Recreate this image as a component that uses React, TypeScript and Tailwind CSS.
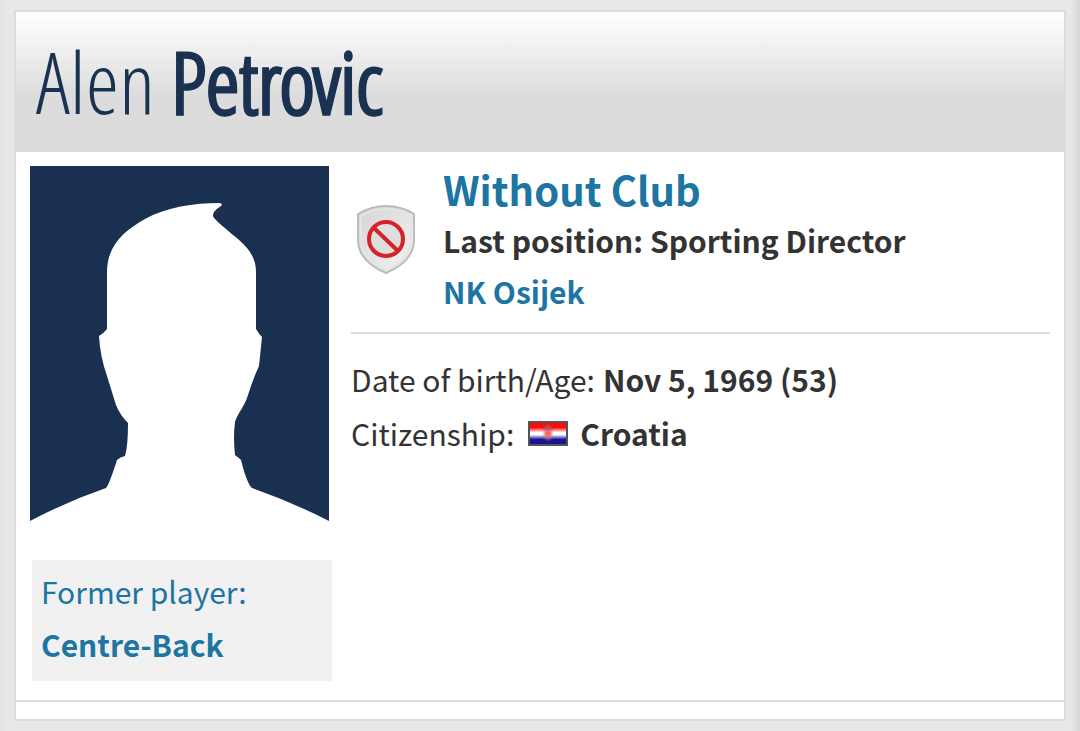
export default function App() {
  return (
    <div className="flex min-h-screen flex-col bg-[linear-gradient(to_right,#e3e3e3_0px,#e8e8e8_10px,#e8e8e8_calc(100%-9px),#d4d4d4_100%)] px-3.5 py-2.5 font-['Noto_Sans_CJK_SC',sans-serif] text-[30px] text-[#333333]">
      <main className="flex-1 border-2 border-[#dcdcdc] bg-white">
        <ProfileHeader />
        <div className="flex gap-5 px-3.5 pt-3.5 pb-[19px]">
          <aside className="w-[301px] shrink-0">
            <Portrait />
            <a
              href="#former-player"
              className="mt-[39px] -mr-px ml-0.5 block bg-[#f1f1f1] px-[9px] pt-[5px] pb-2.5 leading-[53px] text-[#1d75a3]"
            >
              Former player:
              <strong className="block">Centre-Back</strong>
            </a>
          </aside>
          <section className="min-w-0 flex-1">
            <Club />
            <PersonalData />
          </section>
        </div>
        <div className="h-[19px] border-t-2 border-[#dcdcdc]" />
      </main>
    </div>
  );
}

function ProfileHeader() {
  return (
    <header className="flex h-[140px] items-center bg-linear-to-b from-white to-[#dcdcdc] to-60% px-5 pb-0.5">
      <h1 className="font-['Open_Sans_Condensed_Light','Open_Sans_Condensed','Liberation_Sans_Narrow',sans-serif] text-[85px] leading-[120px] font-light text-[#1a3151]">
        Alen{" "}
        <strong className="font-bold [-webkit-text-stroke:1px_#1a3151]">
          Petrovic
        </strong>
      </h1>
    </header>
  );
}

function Club() {
  return (
    <div className="flex items-center border-b-2 border-[#dcdcdc] pb-[15px]">
      <ShieldIcon />
      <div className="-mt-0.5 ml-7 font-bold">
        <h2 className="text-[40px] leading-[51px]">
          <a href="#club" className="text-[#1d75a3]">
            Without Club
          </a>
        </h2>
        <p className="leading-[51px]">Last position: Sporting Director</p>
        <a href="#nk-osijek" className="block leading-[51px] text-[#1d75a3]">
          NK Osijek
        </a>
      </div>
    </div>
  );
}

function PersonalData() {
  return (
    <dl className="pt-[18px] leading-[54px]">
      <div className="flex gap-2">
        <dt>Date of birth/Age:</dt>
        <dd className="font-bold">Nov 5, 1969 (53)</dd>
      </div>
      <div className="flex gap-3.5">
        <dt>Citizenship:</dt>
        <dd className="flex items-center gap-3 font-bold">
          <CroatiaFlag />
          Croatia
        </dd>
      </div>
    </dl>
  );
}

function Portrait() {
  return (
    <svg
      viewBox="0 0 299 355"
      className="block w-[299px]"
      role="img"
      aria-label="Alen Petrovic"
    >
      <path fill="#1a3050" d="M0 0h299v355H0z" />
      <path
        fill="#fff"
        d="M0 355Q38 335 76 322Q79 319 87 294Q90 291 95 290Q98 280 98 257Q90 249 86 239L77 210Q70 190 69 170Q74 167 77 163V106C77 78 96 64 115 53C137 41 163 37 190 37Q193 38 191 40C186 43 183 46 183 50C186 57 208 71 217 82C223 89 226 97 226 106V163Q229 168 232 171L229 200Q223 213 218 229C214 242 208 246 205 256Q203 271 205 289Q209 292 211 294Q217 318 222 322Q262 336 299 355Z"
      />
    </svg>
  );
}

function ShieldIcon() {
  return (
    <svg
      viewBox="0 0 58 70"
      className="mb-1 ml-1.5 w-[58px] shrink-0"
      aria-hidden="true"
    >
      <defs>
        <linearGradient id="shield" x1="0" y1="0" x2="1" y2="1">
          <stop offset="0" stopColor="#d4d4d4" />
          <stop offset="1" stopColor="#f4f4f4" />
        </linearGradient>
      </defs>
      <path
        d="M29 1Q14 1 1 9V35Q1 56 29 68Q57 56 57 35V9Q44 1 29 1Z"
        fill="url(#shield)"
        stroke="#bcbcbc"
        strokeWidth="2"
      />
      <path
        d="M29 4Q16 4 4 11V35Q4 54 29 65Q54 54 54 35V11Q42 4 29 4Z"
        fill="none"
        stroke="#e4e4e4"
        strokeWidth="2"
      />
      <circle
        cx="29"
        cy="34"
        r="17"
        fill="#dedede"
        stroke="#d62328"
        strokeWidth="4"
      />
      <path d="m17 23 24 23" stroke="#d62328" strokeWidth="4" />
    </svg>
  );
}

function CroatiaFlag() {
  return (
    <svg viewBox="0 0 40 25" className="h-[25px] w-10" aria-hidden="true">
      <defs>
        <linearGradient id="flag" x1="0" y1="0" x2="0" y2="1">
          <stop offset="0.22" stopColor="#ff0c08" />
          <stop offset="0.45" stopColor="#fff" />
          <stop offset="0.55" stopColor="#fff" />
          <stop offset="0.78" stopColor="#171796" />
        </linearGradient>
        <radialGradient id="arms">
          <stop offset="0.3" stopColor="#f06a6a" />
          <stop offset="1" stopColor="#f06a6a" stopOpacity="0" />
        </radialGradient>
      </defs>
      <path fill="#555" d="M0 0h40v25H0z" />
      <path fill="url(#flag)" d="M2 2h36v21H2z" />
      <ellipse cx="20" cy="12" rx="6" ry="9" fill="url(#arms)" />
      <path fill="#8a4a78" opacity="0.5" d="M15 5h10v4H15z" />
    </svg>
  );
}
